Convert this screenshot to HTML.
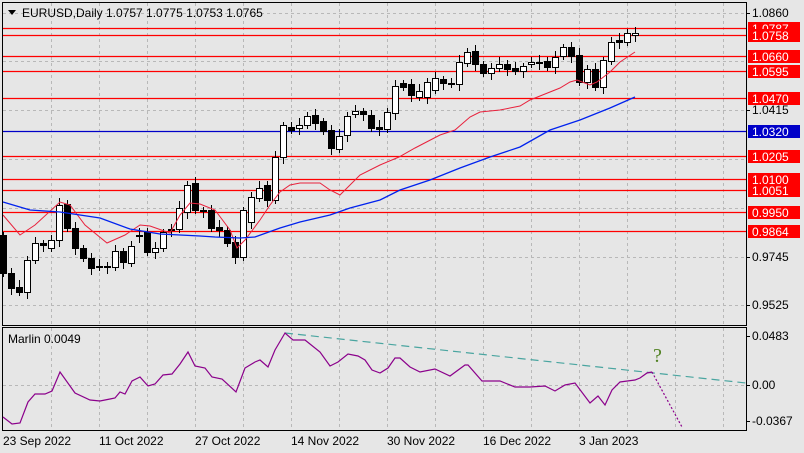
<!DOCTYPE html>
<html><head><meta charset="utf-8"><style>
html,body{margin:0;padding:0;background:#e6e6e6;}
svg{display:block;font-family:"Liberation Sans",sans-serif;}
</style></head><body>
<svg id="s" width="804" height="453" xmlns="http://www.w3.org/2000/svg">
<rect width="804" height="453" fill="#e6e6e6"/>
<g id="grid" stroke="#b8b8b8" stroke-dasharray="3,3" stroke-width="1"></g>
<g id="levels"></g>
<g id="cand"></g>
<polyline id="red" fill="none" stroke="#e8213c" stroke-width="1"/>
<polyline id="blue" fill="none" stroke="#0022ee" stroke-width="1.3"/>
<rect x="2.5" y="2.5" width="744" height="323" fill="none" stroke="#000"/>
<rect x="2.5" y="327.5" width="744" height="103" fill="none" stroke="#000"/>
<polyline id="teal" fill="none" stroke="#4aa5a0" stroke-width="1.2" stroke-dasharray="8,5" points="285,333 746,383"/>
<polyline id="mar" fill="none" stroke="#8b008b" stroke-width="1.2"/>
<polyline fill="none" stroke="#8b008b" stroke-width="1.2" stroke-dasharray="2,2" points="652,372 682,427"/>
<text x="653" y="362" font-family="Liberation Serif,serif" font-size="20" fill="#4f8020">?</text>
<polygon points="8,10 16,10 12,15" fill="#000"/>
<text x="22" y="17" font-size="12" fill="#000">EURUSD,Daily  1.0757 1.0775 1.0753 1.0765</text>
<text x="8" y="343" font-size="12" fill="#000">Marlin 0.0049</text>
<g id="axis" font-size="12" fill="#000"></g>
<g font-size="12" fill="#000">
<text x="3" y="445">23 Sep 2022</text>
<text x="99" y="445">11 Oct 2022</text>
<text x="195" y="445">27 Oct 2022</text>
<text x="291" y="445">14 Nov 2022</text>
<text x="387" y="445">30 Nov 2022</text>
<text x="483" y="445">16 Dec 2022</text>
<text x="579" y="445">3 Jan 2023</text>
</g>
</svg>
<script>
var NS="http://www.w3.org/2000/svg";
function el(p,t,a,txt){var e=document.createElementNS(NS,t);for(var k in a)e.setAttribute(k,a[k]);if(txt)e.textContent=txt;document.getElementById(p).appendChild(e);return e;}
for(var x=51;x<746;x+=48){el('grid','line',{x1:x+.5,y1:3,x2:x+.5,y2:325});el('grid','line',{x1:x+.5,y1:328,x2:x+.5,y2:430});}
[13,61,110,159,208,257,305].forEach(function(y){el('grid','line',{x1:3,y1:y+.5,x2:746,y2:y+.5});});
el('grid','line',{x1:3,y1:385.5,x2:746,y2:385.5});
var L=[[28,'1.0787','#f00'],[35,'1.0758','#f00'],[56,'1.0660','#f00'],[71,'1.0595','#f00'],[98,'1.0470','#f00'],[131,'1.0320','#0000c8'],[156,'1.0205','#f00'],[179,'1.0100','#f00'],[190,'1.0051','#f00'],[212,'0.9950','#f00'],[231,'0.9864','#f00']];
L.forEach(function(l){el('levels','line',{x1:3,y1:l[0]+.5,x2:746,y2:l[0]+.5,stroke:l[2],'stroke-width':1.3});});
[13,110,257,305,336,385,421].forEach(function(y){el('axis','line',{x1:746,y1:y+.5,x2:750,y2:y+.5,stroke:'#000'});});
[[13,'1.0860'],[110,'1.0415'],[257,'0.9745'],[305,'0.9525'],[336,'0.0483'],[385,'0.00'],[421,'-0.0367']].forEach(function(a){el('axis','text',{x:752,y:a[0]+4},a[1]);});
L.forEach(function(l){el('axis','rect',{x:748,y:l[0]-6,width:52,height:13,fill:l[2]=='#f00'?'#ff0000':'#0000c8'});el('axis','text',{x:752,y:l[0]+5,fill:'#fff'},l[1]);});
var C=[[235,273],[273,288],[287,292],[292,260],[260,243],[243,245],[248,240],[240,205],[204,228],[228,248],[248,258],[258,268],[266,267],[266,267],[267,251],[251,262],[263,246],[235,236],[232,252],[252,248],[248,232],[229,230],[229,208],[212,185],[183,210],[210,211],[210,228],[227,230],[230,243],[242,257],[257,210],[222,197],[198,188],[185,200],[200,157],[157,125],[127,130],[128,125],[125,116],[115,123],[121,131],[130,148],[149,136],[135,116],[114,111],[111,114],[115,128],[127,129],[129,112],[113,86],[83,87],[84,95],[97,91],[97,82],[90,78],[79,83],[83,84],[84,62],[63,52],[51,64],[64,73],[73,68],[68,64],[64,69],[68,71],[71,66],[64,62],[62,63],[61,67],[67,57],[56,47],[47,56],[55,82],[82,69],[69,87],[87,60],[61,42],[40,42],[42,33],[35,33]];
C.forEach(function(c,i){var x=3+8*i,t=Math.min(c[0],c[1]),b=Math.max(c[0],c[1]);var w=(i*7)%5;
el('cand','line',{x1:x+.5,y1:t-3-w,x2:x+.5,y2:b+4+(i*3)%6,stroke:'#000'});
var bull=c[1]<c[0];el('cand','rect',{x:x-2.5,y:t+.5,width:6,height:Math.max(b-t,1),fill:bull?'#fff':'#000',stroke:'#000'});});
function pl(id,s){document.getElementById(id).setAttribute('points',s);}
pl('red',"3,215 20,235 35,225 60,202 70,205 85,225 107,243 125,235 140,225 150,226 170,233 180,215 190,203 200,204 215,210 230,230 237,248 245,240 260,220 270,205 280,192 290,185 300,183 320,183 330,190 340,195 360,175 380,165 399,157 415,148 440,135 455,130 470,117 480,112 500,110 520,106 530,100 545,94 560,88 570,82 577,80 590,85 597,82 610,72 620,62 635,52");
pl('blue',"3,202 30,210 60,212 100,218 130,229 160,234 200,236 215,237 240,238 255,237 280,228 300,222 330,215 350,208 380,200 400,190 430,180 460,168 490,157 520,147 550,130 580,120 610,108 635,97");
pl('mar',"3,417 12,424 20,423 28,402 35,394 45,394 52,391 60,372 75,393 90,400 100,401 110,399 115,398 120,392 125,394 132,381 140,377 148,386 155,384 163,375 172,374 180,364 188,352 195,366 205,368 212,377 222,379 236,392 245,368 255,362 260,360 268,367 275,350 285,333 293,340 305,340 320,352 330,366 338,362 348,354 358,356 365,360 372,370 380,373 388,368 395,358 400,358 410,367 420,372 435,369 450,376 465,365 468,365 482,381 500,381 515,387 530,387 545,386 555,391 565,385 575,383 590,403 598,396 605,405 612,390 620,382 635,380 640,378 647,373 652,372");
</script>
</body></html>
